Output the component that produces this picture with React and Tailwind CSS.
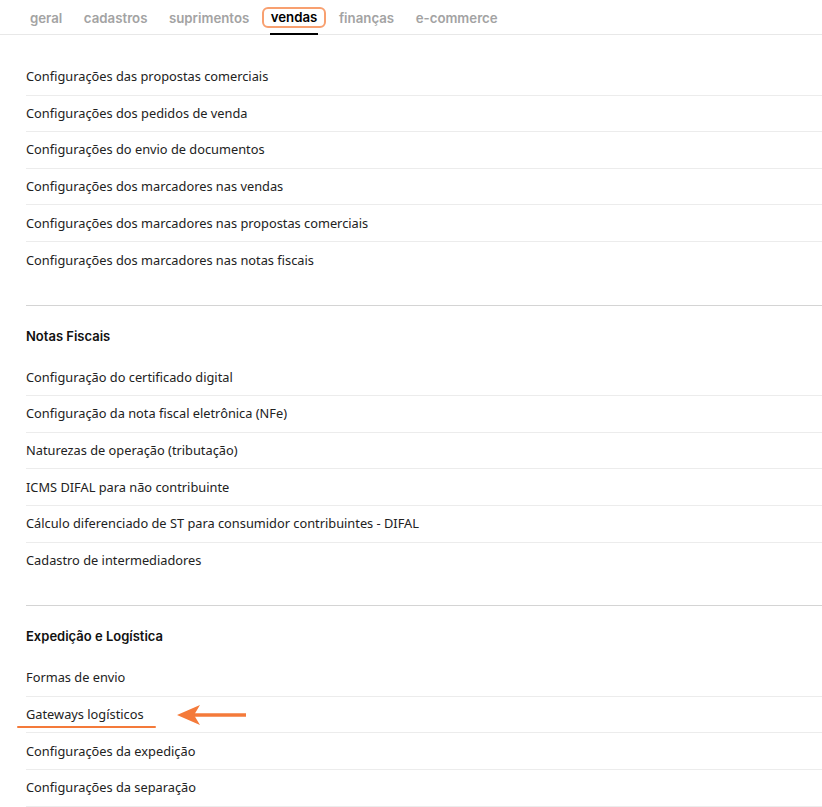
import React from 'react';

const tabs = ['geral', 'cadastros', 'suprimentos', 'vendas', 'finanças', 'e-commerce'];

const sections = [
    {
        title: null,
        items: [
            'Configurações das propostas comerciais',
            'Configurações dos pedidos de venda',
            'Configurações do envio de documentos',
            'Configurações dos marcadores nas vendas',
            'Configurações dos marcadores nas propostas comerciais',
            'Configurações dos marcadores nas notas fiscais',
        ],
    },
    {
        title: 'Notas Fiscais',
        items: [
            'Configuração do certificado digital',
            'Configuração da nota fiscal eletrônica (NFe)',
            'Naturezas de operação (tributação)',
            'ICMS DIFAL para não contribuinte',
            'Cálculo diferenciado de ST para consumidor contribuintes - DIFAL',
            'Cadastro de intermediadores',
        ],
    },
    {
        title: 'Expedição e Logística',
        items: [
            'Formas de envio',
            'Gateways logísticos',
            'Configurações da expedição',
            'Configurações da separação',
        ],
        lastBorder: true,
    },
];

function Tabs() {
    return (
        <div className="flex items-end h-[35px] border-b border-[#e8e8e8] pl-[21px] gap-[3.5px] font-['Inter',sans-serif] font-semibold text-[13.25px]">
            {tabs.map((t) => (
                t === 'vendas' ? (
                    <div key={t} className="relative h-full flex items-start">
                        <span className="mt-[7px] px-[7px] h-[21px] flex items-center rounded-[6px] border-2 border-[#f8a070] text-black">{t}</span>
                        <div className="absolute bottom-[-1px] left-[8px] right-[8px] h-[2px] bg-black" />
                    </div>
                ) : (
                    <span key={t} className="px-[9px] h-full pt-[9px] text-[#a3a3a3]">{t}</span>
                )
            ))}
        </div>
    );
}

function Section({ title, items, lastBorder, first }) {
    return (
        <div className={first ? 'pt-[24px] pb-[26px]' : 'border-t border-[#d4d4d4] pt-[21px] pb-[26px]'}>
            {title && (
                <h2 className="h-[20px] mb-[13px] flex items-center font-['Inter',sans-serif] font-semibold text-[13px] text-[#111]">{title}</h2>
            )}
            {items.map((item, i) => (
                <div
                    key={item}
                    className={
                        'relative h-[36.6px] flex items-center text-[12.8px] text-[#222] ' +
                        (i < items.length - 1 || lastBorder ? 'border-b border-[#ececec]' : '')
                    }
                >
                    {item}
                    {item === 'Gateways logísticos' && (
                        <>
                            <div className="absolute left-[-9px] top-[29px] w-[139px] h-[2.5px] rounded-full bg-[#f47a3a]" />
                            <svg className="absolute left-[150px] top-[7px]" width="72" height="22" viewBox="0 0 72 22">
                                <path d="M70 11 H18" stroke="#f47a3a" strokeWidth="3.5" />
                                <path d="M1 11 L24 1 L18 11 L24 21 Z" fill="#f47a3a" />
                            </svg>
                        </>
                    )}
                </div>
            ))}
        </div>
    );
}

export default function App() {
    return (
        <div className="w-[822px] h-[807px] overflow-hidden bg-white font-['Noto_Sans',sans-serif]">
            <Tabs />
            <div className="pl-[26px]">
                {sections.map((s, i) => (
                    <Section key={i} {...s} first={i === 0} />
                ))}
            </div>
        </div>
    );
}
